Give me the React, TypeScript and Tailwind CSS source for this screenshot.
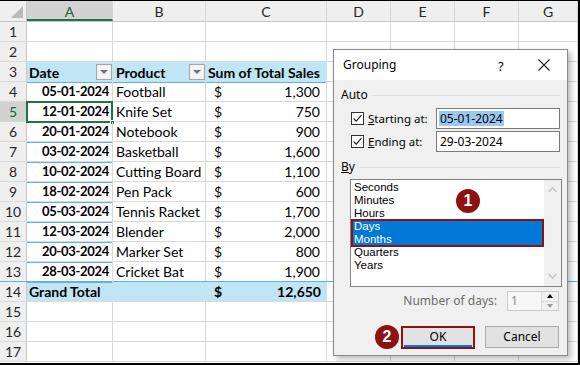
import React from "react";

const COLW = [27, 86, 93, 121, 64, 64, 64, 59];
const F = { fontFamily: "Lato, 'Liberation Sans', sans-serif" };
const DF = { fontFamily: "'Noto Sans', 'Liberation Sans', sans-serif" };
const LF = { fontFamily: "'Liberation Sans', Arial, sans-serif" };

type Row = { date: string; product: string; amt: string };
const DATA: Row[] = [
  { date: "05-01-2024", product: "Football", amt: "1,300" },
  { date: "12-01-2024", product: "Knife Set", amt: "750" },
  { date: "20-01-2024", product: "Notebook", amt: "900" },
  { date: "03-02-2024", product: "Basketball", amt: "1,600" },
  { date: "10-02-2024", product: "Cutting Board", amt: "1,100" },
  { date: "18-02-2024", product: "Pen Pack", amt: "600" },
  { date: "05-03-2024", product: "Tennis Racket", amt: "1,700" },
  { date: "12-03-2024", product: "Blender", amt: "2,000" },
  { date: "20-03-2024", product: "Marker Set", amt: "800" },
  { date: "28-03-2024", product: "Cricket Bat", amt: "1,900" },
];

function DropBtn() {
  return (
    <div className="w-[16px] h-[16px] border border-[#a6a6a6] bg-[#f3f3f3] flex items-center justify-center shrink-0">
      <div className="w-0 h-0 border-l-[4px] border-r-[4px] border-t-[4px] border-l-transparent border-r-transparent border-t-[#707070]" />
    </div>
  );
}

function RowHead({ n, sel }: { n: number; sel?: boolean }) {
  return (
    <div
      className={`shrink-0 h-full flex items-center justify-center text-[14px] border-r ${
        sel ? "bg-[#d2d2d2] text-[#1e5e3a] border-r-[#217346]" : "bg-[#efefef] text-[#262626] border-r-[#c8c8c8]"
      }`}
      style={{ width: COLW[0] }}
    >
      {n}
    </div>
  );
}

function Blank({ i }: { i: number }) {
  return <div className="shrink-0 h-full border-r border-[#d9d9d9]" style={{ width: COLW[i] }} />;
}

export default function App() {
  const rows: React.ReactNode[] = [];
  const rowCls = "flex h-[20px] border-b border-[#d9d9d9]";

  for (const n of [1, 2]) {
    rows.push(
      <div key={n} className={rowCls}>
        <RowHead n={n} />
        {[1, 2, 3, 4, 5, 6, 7].map((i) => (
          <Blank key={i} i={i} />
        ))}
      </div>
    );
  }
  rows.push(
    <div key={3} className="flex h-[20px] border-b border-[#d9d9d9]">
      <RowHead n={3} />
      <div className="flex shrink-0 h-[21px] -mb-px bg-[#c0e5f5] border-b border-[#5db3e4] font-bold text-[14px] text-black" style={{ width: COLW[1] + COLW[2] + COLW[3] }}>
        <div className="flex items-center justify-between pl-[2px] pr-[1px] h-[20px]" style={{ width: COLW[1] }}>
          <span>Date</span>
          <DropBtn />
        </div>
        <div className="flex items-center justify-between pl-[3px] pr-[1px] h-[20px]" style={{ width: COLW[2] }}>
          <span>Product</span>
          <DropBtn />
        </div>
        <div className="flex items-center pl-[2px] h-[20px]" style={{ width: COLW[3] }}>
          <span>Sum of Total Sales</span>
        </div>
      </div>
      {[4, 5, 6, 7].map((i) => (
        <Blank key={i} i={i} />
      ))}
    </div>
  );
  DATA.forEach((r, idx) => {
    const n = idx + 4;
    const last = idx === DATA.length - 1;
    const selA = n === 5;
    rows.push(
      <div key={n} className={`flex h-[20px] border-b ${last ? "border-[#5db3e4]" : "border-[#d9d9d9]"}`}>
        <RowHead n={n} sel={selA} />
        <div
          className="relative shrink-0 h-[21px] -mb-px flex items-center justify-end pr-[3px] font-bold text-[13px] tracking-[-0.3px] text-black border-b border-[#5db3e4] border-r border-r-[#d9d9d9]"
          style={{ width: COLW[1] }}
        >
          {r.date}
          {selA && (
            <>
              <div className="absolute left-[-1px] top-[-1px] right-[-1px] bottom-[-1px] border-2 border-[#217346] pointer-events-none" />
              <div className="absolute right-[-3px] bottom-[-3px] w-[5px] h-[5px] bg-[#217346] border border-white" />
            </>
          )}
        </div>
        <div className="shrink-0 h-full flex items-center pl-[3px] text-[14px] text-black border-r border-[#d9d9d9]" style={{ width: COLW[2] }}>
          {r.product}
        </div>
        <div className="shrink-0 h-full flex items-center justify-between pl-[8px] pr-[6px] text-[14px] text-black border-r border-[#d9d9d9]" style={{ width: COLW[3] }}>
          <span>$</span>
          <span>{r.amt}</span>
        </div>
        {[4, 5, 6, 7].map((i) => (
          <Blank key={i} i={i} />
        ))}
      </div>
    );
  });
  rows.push(
    <div key={14} className={rowCls}>
      <RowHead n={14} />
      <div className="flex shrink-0 h-full bg-[#c0e5f5] font-bold text-[14px] text-black items-center" style={{ width: COLW[1] + COLW[2] + COLW[3] }}>
        <div className="pl-[2px]" style={{ width: COLW[1] + COLW[2] }}>
          Grand Total
        </div>
        <div className="flex justify-between pl-[8px] pr-[6px]" style={{ width: COLW[3] }}>
          <span>$</span>
          <span>12,650</span>
        </div>
      </div>
      {[4, 5, 6, 7].map((i) => (
        <Blank key={i} i={i} />
      ))}
    </div>
  );
  for (const n of [15, 16, 17]) {
    rows.push(
      <div key={n} className={rowCls}>
        <RowHead n={n} />
        {[1, 2, 3, 4, 5, 6, 7].map((i) => (
          <Blank key={i} i={i} />
        ))}
      </div>
    );
  }

  const letters = ["A", "B", "C", "D", "E", "F", "G"];

  return (
    <div className="relative w-[580px] h-[365px] overflow-hidden bg-white border-t border-r-2 border-b-2 border-black box-border" style={F}>
      <div className="flex h-[21px] border-b border-[#c8c8c8] bg-[#efefef]">
        <div className="relative shrink-0 h-full border-r border-[#c8c8c8]" style={{ width: COLW[0] }}>
          <div className="absolute right-[3px] bottom-[3px] w-0 h-0" style={{ borderBottom: "12px solid #b9b9b9", borderLeft: "12px solid transparent" }} />
        </div>
        {letters.map((l, k) => {
          const sel = k === 0;
          return (
            <div
              key={l}
              className={`shrink-0 h-full flex items-center justify-center text-[14px] border-r border-[#d5d5d5] ${
                sel ? "bg-[#d2d2d2] text-[#1e5e3a] border-b-2 border-b-[#217346] pt-[2px]" : "text-[#262626]"
              }`}
              style={{ width: COLW[k + 1] }}
            >
              {l}
            </div>
          );
        })}
      </div>
      {rows}

      {/* Dialog */}
      <div className="absolute left-[333px] top-[48px] w-[235px] h-[307px] border border-[#8a8a8a] bg-[#f0f0f0] shadow-[3px_3px_6px_rgba(0,0,0,0.28)] text-[12px] text-black" style={DF}>
        <div className="h-[30px] bg-white flex items-center pl-[9px] relative">
          <span>Grouping</span>
          <span className="absolute left-[164px] top-[7px] text-[13px]">?</span>
          <svg className="absolute left-[204px] top-[9px]" width="12" height="12" viewBox="0 0 12 12">
            <path d="M0.5 0.5 L11.5 11.5 M11.5 0.5 L0.5 11.5" stroke="#222" strokeWidth="1.1" fill="none" />
          </svg>
        </div>
        <div className="px-[7px] pt-[8px] flex flex-col">
          <div className="flex items-center h-[14px] gap-[4px]">
            <span>Auto</span>
            <div className="flex-1 h-px bg-[#dcdcdc]" />
          </div>
          <div className="flex items-center h-[21px] mt-[6px]">
            <CheckBox />
            <span className="ml-[4px] w-[68px] text-[11.5px]">
              <u>S</u>tarting at:
            </span>
            <div className="flex-1 h-full bg-white border border-[#7a7a7a] flex items-center pl-[2px]">
              <span className="bg-[#99c9ef] px-[1px] leading-[15px]">05-01-2024</span>
            </div>
          </div>
          <div className="flex items-center h-[21px] mt-[2px]">
            <CheckBox />
            <span className="ml-[4px] w-[68px] text-[11.5px]">
              <u>E</u>nding at:
            </span>
            <div className="flex-1 h-full bg-white border border-[#7a7a7a] flex items-center pl-[3px]">
              <span>29-03-2024</span>
            </div>
          </div>
          <div className="flex items-center h-[14px] gap-[4px] mt-[8px]">
            <span>
              <u>B</u>y
            </span>
            <div className="flex-1 h-px bg-[#dcdcdc]" />
          </div>
          <div className="ml-[9px] mt-[5px] w-[212px] h-[108px] bg-white border border-[#828282] flex">
            <div className="flex-1 pt-[1px] leading-[13px] text-[11.5px] flex flex-col" style={LF}>
              <div className="pl-[3px] h-[13px]">Seconds</div>
              <div className="pl-[3px] h-[13px]">Minutes</div>
              <div className="pl-[3px] h-[13px]">Hours</div>
              <div className="bg-[#0078d7] text-white shadow-[inset_0_0_0_2px_#8e1212] h-[28px] -my-px flex flex-col justify-center">
                <div className="pl-[3px] h-[13px]">Days</div>
                <div className="pl-[3px] h-[13px]">Months</div>
              </div>
              <div className="pl-[3px] h-[13px]">Quarters</div>
              <div className="pl-[3px] h-[13px]">Years</div>
            </div>
            <div className="w-[17px] h-full bg-[#f0f0f0] flex flex-col items-center justify-between py-[7px]">
              <svg width="9" height="6" viewBox="0 0 9 6">
                <path d="M0.5 5 L4.5 1 L8.5 5" stroke="#c4c4c4" strokeWidth="1.4" fill="none" />
              </svg>
              <svg width="9" height="6" viewBox="0 0 9 6">
                <path d="M0.5 1 L4.5 5 L8.5 1" stroke="#c4c4c4" strokeWidth="1.4" fill="none" />
              </svg>
            </div>
          </div>
          <div className="flex items-center justify-end h-[20px] mt-[4px] pr-[1px]">
            <span className="text-[#6d6d6d] mr-[10px]">Number of days:</span>
            <div className="w-[52px] h-full border border-[#cccccc] bg-[#f7f7f7] flex">
              <div className="flex-1 pl-[3px] text-[#8a8a8a] flex items-center">1</div>
              <div className="w-[17px] flex flex-col border-l border-[#dcdcdc]">
                <div className="flex-1 flex items-center justify-center bg-[#f0f0f0] border-b border-[#dcdcdc]">
                  <div className="w-0 h-0 border-l-[3px] border-r-[3px] border-b-[4px] border-l-transparent border-r-transparent border-b-black" />
                </div>
                <div className="flex-1 flex items-center justify-center bg-[#f0f0f0]">
                  <div className="w-0 h-0 border-l-[3px] border-r-[3px] border-t-[4px] border-l-transparent border-r-transparent border-t-[#9a9a9a]" />
                </div>
              </div>
            </div>
          </div>
          <div className="flex justify-end gap-[10px] mt-[15px] pr-[1px]">
            <div className="w-[74px] h-[23px] border-2 border-[#8e1212] bg-[#e1e1e1] flex">
              <div className="flex-1 flex items-center justify-center border-b-2 border-[#0078d7] mx-[1px]">OK</div>
            </div>
            <div className="w-[74px] h-[22px] border border-[#adadad] bg-[#e1e1e1] flex items-center justify-center">Cancel</div>
          </div>
        </div>
        <Badge n="1" x={134} y={151} />
        <Badge n="2" x={53} y={287} />
      </div>
    </div>
  );
}

function CheckBox() {
  return (
    <div className="ml-[10px] w-[13px] h-[13px] border border-[#333] bg-white flex items-center justify-center shrink-0">
      <svg width="11" height="11" viewBox="0 0 11 11">
        <path d="M1.5 5.5 L4.2 8.2 L9.5 2.2" stroke="#222" strokeWidth="1.1" fill="none" />
      </svg>
    </div>
  );
}

function Badge({ n, x, y }: { n: string; x: number; y: number }) {
  return (
    <div
      className="absolute w-[24px] h-[24px] rounded-full bg-[#8e1212] text-white font-bold text-[16px] flex items-center justify-center"
      style={{ left: x - 12, top: y - 12, fontFamily: "'Liberation Sans', Arial, sans-serif" }}
    >
      {n}
    </div>
  );
}
